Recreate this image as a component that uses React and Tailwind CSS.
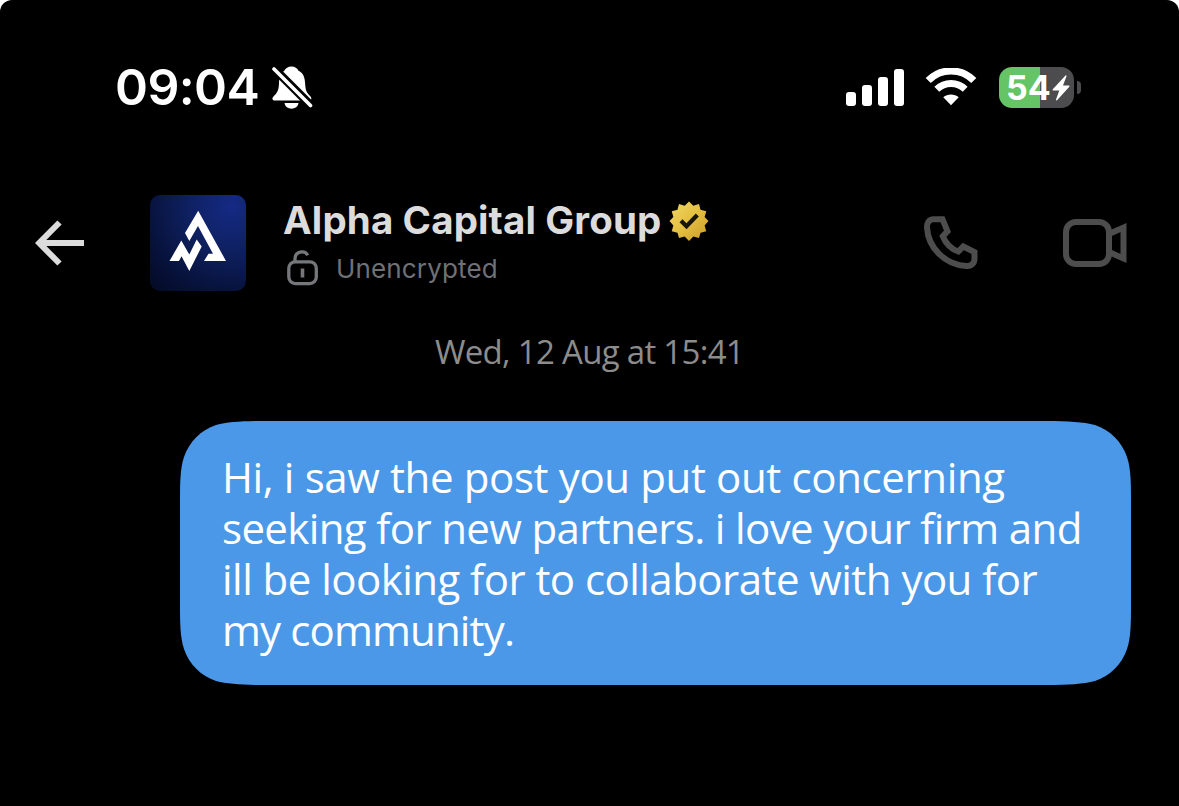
const BellOff = () => (
  <svg className="h-[44px] w-[42px]" viewBox="0 0 42 44" fill="#fff">
    <defs>
      <mask id="slash">
        <path d="M0 0H42V44H0Z" fill="#fff" />
        <path d="M0 0.5L42 42.5" stroke="#000" strokeWidth="8.5" />
      </mask>
    </defs>
    <g mask="url(#slash)">
      <path d="M20.500 1.500c-3.500 0-6 1.700-7.200 4.300C9.800 8 8 12 8 17c0 8-1.500 10.500-5.500 14.500C.5 33.800 1.500 35.500 4 35.500h34c2.500 0 3.200-2 1.300-4.300C35 27 34.500 25 34 17 33.500 11 31.500 7.700 27.500 5.800c-1.200-2.600-3.500-4.300-7-4.300Z" />
    </g>
    <path d="M13.500 38h14c-.6 3.600-3.500 5.700-7 5.700s-6.400-2.100-7-5.700Z" />
    <path d="M3 4L39.500 40.500" stroke="#fff" strokeWidth="3.600" strokeLinecap="round" />
  </svg>
);

const Wifi = () => (
  <svg className="h-[38px] w-[52px]" viewBox="0 0 52 38" fill="none" stroke="#fff">
    <path d="M3.200 12.500C16-.2 36-.2 48.800 12.500" strokeWidth="7.200" />
    <path d="M11.800 21.200C19.800 13.500 32.200 13.500 40.200 21.200" strokeWidth="7" />
    <path d="M18.300 29.300C22.600 25.600 29.400 25.600 33.700 29.300L26 37.300Z" fill="#fff" stroke="none" />
  </svg>
);

const Battery = () => (
  <div className="flex items-center gap-[3px]">
    <div className="flex h-[41px] w-[75px] items-center overflow-hidden rounded-[13px] bg-[linear-gradient(90deg,#65c466_55%,#4c4c4e_55%)] pl-[7px]">
      <span className="w-[46px] whitespace-nowrap font-['Inter'] text-[34px] font-bold leading-[41px]">54</span>
      <svg className="mt-[2px] h-[26px] w-[18px]" viewBox="0 0 18 26" fill="#fff">
        <path d="M13.500 0.500L0.800 14.200Q0 15.500 1.300 15.500H7.300L4 24.500Q4 26 5.300 25L17.300 11.800Q18 10.500 16.800 10.500H11L14.500 1.200Q14.500 0 13.500 0.500Z" />
      </svg>
    </div>
    <div className="h-[13px] w-[4px] rounded-r-full bg-[#4c4c4e]" />
  </div>
);

const StatusBar = () => (
  <div className="flex h-[48px] items-center justify-between pl-[115px] pr-[98px]">
    <div className="flex items-center">
      <span className="w-[156px] whitespace-nowrap font-['Inter'] text-[50px] font-semibold leading-[48px] tracking-[-0.6px]">09:04</span>
      <BellOff />
    </div>
    <div className="flex items-center">
      <div className="flex items-end gap-[6px]">
        <div className="h-[14px] w-[10px] rounded-[3px] bg-white" />
        <div className="h-[21px] w-[10px] rounded-[3px] bg-white" />
        <div className="h-[29px] w-[10px] rounded-[3px] bg-white" />
        <div className="h-[37px] w-[10px] rounded-[3px] bg-white" />
      </div>
      <div className="ml-[21px] mr-[22px]"><Wifi /></div>
      <Battery />
    </div>
  </div>
);

const Arrow = () => (
  <svg className="h-[46px] w-[50px]" viewBox="0 0 50 46" fill="none" stroke="#dcdcdc" strokeWidth="6">
    <path d="M24.500 2.500L4.200 23L24.500 43.500M4 23H49" />
  </svg>
);

const Logo = () => (
  <div className="h-24 w-24 overflow-hidden rounded-[10px] bg-[radial-gradient(circle_at_85%_12%,#152a85_0%,#0f2163_35%,#081440_68%,#040a24_100%)]">
    <svg className="h-24 w-24" viewBox="0 0 96 96" fill="#fff">
      <path d="M48.200 15.700L76 66H54L58.500 58.700H63L48 31L39.300 46L35 38Z" />
      <path d="M31.300 45.500L39.300 59.500L46.700 44.500L51.700 51.500L39.300 76L31.500 61.300L29 66H19.500Z" />
    </svg>
  </div>
);

const Badge = () => (
  <svg className="h-[40px] w-[40px]" viewBox="0 0 40 40">
    <defs>
      <linearGradient id="gold" x1="0" y1="0" x2="1" y2="1">
        <stop offset="0" stopColor="#f0d766" />
        <stop offset=".5" stopColor="#e4bf40" />
        <stop offset="1" stopColor="#c99a28" />
      </linearGradient>
    </defs>
    <path fill="url(#gold)" d="M20 .5L24.300 4.700L30 3L31.500 8.800L37.300 10.300L35.600 16L39.500 20L35.600 24.500L37.300 30.200L31.500 31.700L30 37L24.300 35.600L20 40L15.700 35.600L10 37L8.500 31.700L2.700 30.200L4.400 24.500L.5 20L4.400 16L2.700 10.300L8.500 8.800L10 3L15.700 4.700Z" />
    <path d="M12 19.800L17.500 25.300L28.300 14" fill="none" stroke="#1a1503" strokeWidth="4.200" />
  </svg>
);

const OpenLock = () => (
  <svg className="h-[36px] w-[32px]" viewBox="0 0 32 36" fill="none" stroke="#75777b" strokeWidth="3.300">
    <rect x="1.800" y="11.800" width="27.500" height="21.800" rx="6.500" />
    <path d="M8 12V9C8 1.500 17.500-.5 20.800 5.300" />
    <path d="M15.500 18.500V27.500" strokeWidth="3.600" />
  </svg>
);

const Phone = () => (
  <svg className="h-[56px] w-[56px]" viewBox="0 0 56 56" fill="none" stroke="#4d4d4d" strokeWidth="6">
    <path d="M10.500 4.200H19.500L24.500 16.300L19.800 21.300C22 27.500 28 34 35.300 36.500L40.300 31.500L51.500 37V43.500C51.500 48.500 48 51.500 43.500 51C22 50 5 32.500 4 12.500C3.700 8 6 4.200 10.500 4.200Z" />
  </svg>
);

const Video = () => (
  <svg className="h-[50px] w-[64px]" viewBox="0 0 64 50" fill="none" stroke="#4d4d4d" strokeWidth="6">
    <rect x="3" y="4" width="43" height="42" rx="10" />
    <path d="M47 15.500L60.500 9.500V40.500L47 34.500" />
  </svg>
);

const Header = () => (
  <div className="mt-[84px] flex h-24 items-center pl-[35px] pr-[52px]">
    <Arrow />
    <div className="ml-[65px]"><Logo /></div>
    <div className="ml-[37px] flex h-24 flex-col">
      <div className="flex h-[52px] items-center">
        <span className="-mt-[2px] w-[386px] whitespace-nowrap font-['Inter'] text-[38.500px] font-bold leading-[52px] tracking-[0.12px] text-[#dcdcdc]">Alpha Capital Group</span>
        <Badge />
      </div>
      <div className="flex h-[42px] items-center gap-[17px] pl-[4px]">
        <OpenLock />
        <span className="mt-[2px] whitespace-nowrap font-['Inter'] text-[26px] leading-[42px] tracking-[0.15px] text-[#6f7175]">Unencrypted</span>
      </div>
    </div>
    <div className="ml-auto flex items-center gap-[84px]">
      <Phone />
      <Video />
    </div>
  </div>
);

export default function App() {
  return (
    <div className="h-[806px] w-[1179px] overflow-hidden bg-white text-white">
      <div className="h-[806px] overflow-hidden rounded-t-[12px] bg-black pt-[63px]">
        <StatusBar />
        <Header />
        <div className="mt-[36px] flex h-[50px] items-center justify-center">
          <span className="whitespace-nowrap font-['Open_Sans'] text-[33px] leading-[50px] tracking-[-0.7px] text-[#8c8c8c]">Wed, 12 Aug at 15:41</span>
        </div>
        <div className="ml-[180px] mt-[44px] flex h-[264px] w-[951px] flex-col bg-[#4b98e8] pl-[42px] pt-[30px] font-['Open_Sans'] text-[42px] leading-[51px] [clip-path:path('M0_85C0_62_0_48_4_36C9_21_21_9_36_4C48_1_62_0_85_0H866C889_0_903_1_915_4C930_9_942_21_947_36C951_48_951_62_951_85V179C951_202_951_216_947_228C942_243_930_255_915_260C903_263_889_264_866_264H85C62_264_48_263_36_260C21_255_9_243_4_228C0_216_0_202_0_179Z')]">
          <span className="whitespace-nowrap tracking-[-0.37px]">Hi, i saw the post you put out concerning</span>
          <span className="whitespace-nowrap tracking-[-0.63px]">seeking for new partners. i love your firm and</span>
          <span className="whitespace-nowrap tracking-[-0.54px]">ill be looking for to collaborate with you for</span>
          <span className="whitespace-nowrap tracking-[-0.85px]">my community.</span>
        </div>
      </div>
    </div>
  );
}
